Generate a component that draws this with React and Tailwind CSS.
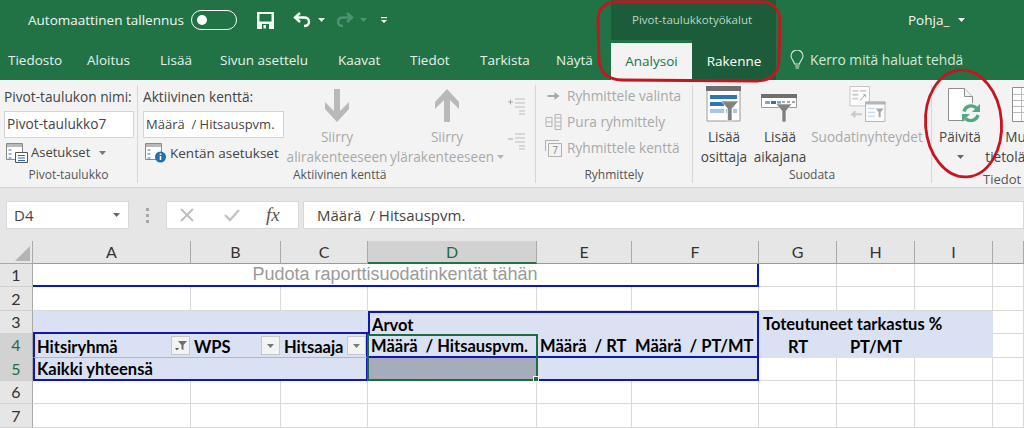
// App.jsx — Excel pivot table ribbon and sheet
const BLUE_CELL = 'border-[#0f17b4]'

function Caret({ className = '' }) {
  return (
    <svg width="7" height="4" viewBox="0 0 7 4" className={className}>
      <path d="M0 0h7L3.500 4z" fill="currentColor" />
    </svg>
  )
}

function SaveIcon() {
  return (
    <svg width="17" height="17" viewBox="0 0 17 17">
      <path d="M0 0h17v17H0z" fill="#f2f7f4" />
      <path d="M2.500 2h12v7.500h-12z" fill="#217346" />
      <path d="M5 12h7v5H5z" fill="#217346" />
      <path d="M6.500 13h2.500v3.500H6.500z" fill="#f2f7f4" />
    </svg>
  )
}

function UndoIcon({ color = '#fff', flip = false }) {
  return (
    <svg width="19" height="16" viewBox="0 0 19 16" fill="none" className={flip ? '-scale-x-100' : ''}>
      <path d="M2 5.500h9c3.500 0 5 2 5 4.500 0 2.500-2 4-5 4" stroke={color} strokeWidth="2.400" />
      <path d="M7 1L2 5.500 7 10" stroke={color} strokeWidth="2.400" />
    </svg>
  )
}

function BulbIcon() {
  return (
    <svg width="14" height="20" viewBox="0 0 14 20" fill="none" stroke="#d5e8dc" strokeWidth="1.100">
      <path d="M4.500 14c0-3-3.500-4.500-3.500-8a6 6 0 0 1 12 0c0 3.500-3.500 5-3.500 8z" />
      <path d="M5 16h4.500M5.500 18h3.500" />
    </svg>
  )
}

function SheetGlyph({ badge }) {
  return (
    <svg width="24" height="20" viewBox="0 0 24 20" fill="none">
      <path d="M.5.500h16v16H.500z" fill="#fff" stroke="#8a8a8a" />
      <path d="M1 1h15v3H1z" fill="#b9b9b9" />
      <path d="M2.500 6h3v2h-3zM2.500 10h3v2h-3zM2.500 14h3v2h-3z" fill="#9cb9d4" />
      {badge === 'list' ? (
        <>
          <path d="M9.500 9.500h12v10h-12z" fill="#fff" stroke="#555" />
          <path d="M12 12.500h7M12 15h7M12 17.500h7" stroke="#2b6ca3" />
        </>
      ) : (
        <>
          <circle cx="15.500" cy="14" r="5.500" fill="#1f6fb2" />
          <path d="M15.500 13v4M15.500 10.500v1.500" stroke="#fff" strokeWidth="1.600" />
        </>
      )}
    </svg>
  )
}

function BigArrow({ up }) {
  return (
    <svg width="28" height="33" viewBox="0 0 28 33" className={up ? 'rotate-180' : ''}>
      <path d="M11 0h6v22l9-9v7L14 33 2 20v-7l9 9z" fill="#b9b9b9" />
    </svg>
  )
}

function OutlineIcon({ minus }) {
  return (
    <svg width="18" height="18" viewBox="0 0 18 18" fill="none">
      <path d={minus ? 'M0 7h5' : 'M0 5h5M2.500 2.500v5'} stroke="#a8a8a8" />
      <path d="M7 2h10M7 6h10M7 10h10M11 14h6M11 17h6" stroke="#bdbdbd" />
    </svg>
  )
}

function GroupIcon({ kind }) {
  if (kind === 'arrow') {
    return (
      <svg width="17" height="14" viewBox="0 0 16 14">
        <path d="M2 6h7V3l5 4-5 4V8H2z" fill="#a9a9a9" />
      </svg>
    )
  }
  if (kind === 'split') {
    return (
      <svg width="17" height="16" viewBox="0 0 16 16" fill="none" stroke="#b5b5b5">
        <path d="M.500 3.500h6v9h-6zM9.500 .500h6v15h-6zM.500 8h6M9.500 4h6M9.500 8h6M9.500 12h6" />
      </svg>
    )
  }
  return (
    <svg width="17" height="17" viewBox="0 0 17 17" fill="none" stroke="#b0b0b0">
      <path d="M.500 11V.500H14" />
      <path d="M3.500 3.500h13v13h-13z" fill="#f3f3f3" />
      <text x="10" y="14" textAnchor="middle" fontSize="10" fill="#8d8d8d" stroke="none">7</text>
    </svg>
  )
}

function FunnelShape({ x, y, s = 1, fill = '#808080' }) {
  return (
    <path
      transform={`translate(${x} ${y}) scale(${s})`}
      d="M0 0h16L10 7v11H6V7z"
      fill={fill}
      stroke="#fff"
      strokeWidth=".6"
    />
  )
}

function SlicerIcon() {
  return (
    <svg width="36" height="36" viewBox="0 0 36 36">
      <path d="M1 1h33v34H1z" fill="#fff" stroke="#9a9a9a" />
      <path d="M0 0h35v5H0z" fill="#6f6f6f" />
      <path d="M4 9h27v4H4zM4 16h14v4H4z" fill="#2e75b6" />
      <path d="M4 23h14v4H4zM20 23h4v4h-4zM27 23h4v4h-4z" fill="#a9c6e3" />
      <FunnelShape x={15} y={15} s={1.100} />
    </svg>
  )
}

function TimelineIcon() {
  return (
    <svg width="38" height="38" viewBox="0 -10 38 38">
      <path d="M.500 .500h35v13H.500z" fill="#fff" stroke="#9a9a9a" />
      <path d="M0 0h36v4H0z" fill="#6f6f6f" />
      <path d="M4 7h5v3H4zM16 7h4v3h-4z" fill="#7fa8d0" />
      <path d="M10 7h5v3h-5z" fill="#2e75b6" />
      <path d="M21 7h3v2h-3zM26 7h3v2h-3zM31 7h3v2h-3z" fill="#a9a9a9" />
      <FunnelShape x={15} y={10} s={1} />
    </svg>
  )
}

function ConnectionsIcon() {
  return (
    <svg width="37" height="36" viewBox="0 0 37 37" fill="none">
      <path d="M.500 .500h20v20H.500z" fill="#fbfbfb" stroke="#c4c4c4" />
      <path d="M3 4h6v2H3zM11 4h6v2h-6zM3 8h6v2H3zM3 12h6v2H3z" fill="#cfcfcf" />
      <path d="M11 15l5-6M14 9h2.500v2.500" stroke="#a8a8a8" />
      <path d="M16.500 16.500h20v20h-20z" fill="#fbfbfb" stroke="#b5b5b5" />
      <path d="M16 16h21v3H16z" fill="#b5b5b5" />
      <path d="M19 23h7M19 27h7M19 31h7" stroke="#bcd0e2" />
      <path d="M27 23h8l-3 4v5h-2v-5z" fill="#a8a8a8" />
      <path d="M13 29H3l3-3M3 29l3 3" stroke="#c9c9c9" strokeWidth="2" />
    </svg>
  )
}

function RefreshIcon() {
  return (
    <svg width="34" height="38" viewBox="0 0 34 38" fill="none" className="ml-[9px]">
      <path d="M.500 4.500h16l8 8v24H.500z" fill="#fff" stroke="#8e8e8e" />
      <path d="M16.500 4.500v8h8" fill="#f3f3f3" stroke="#8e8e8e" />
      <circle cx="23" cy="29" r="10" fill="#f3f3f3" />
      <path d="M16 27.500a7.500 7.500 0 0 1 12.500-3.500" stroke="#55a783" strokeWidth="3.200" />
      <path d="M32 20v8h-8z" fill="#55a783" />
      <path d="M30 31a7.500 7.500 0 0 1-12.500 3.500" stroke="#55a783" strokeWidth="3.200" />
      <path d="M14 38v-8h8z" fill="#55a783" />
    </svg>
  )
}

function DataSourceIcon() {
  return (
    <svg width="28" height="35" viewBox="0 0 28 35" fill="none" stroke="#8e8e8e">
      <path d="M.500 .500h27v34h-27z" fill="#fff" />
      <path d="M9.500 1v33M18.500 1v33M1 7.500h26M1 13.500h26M1 19.500h26M1 25.500h26" stroke="#bcbcbc" />
    </svg>
  )
}

function Group({ width, label, children }) {
  return (
    <div className={`${width} flex flex-col shrink-0 border-r border-[#d6d6d6] mb-[4px]`}>
      <div className="h-[86px] flex overflow-hidden">{children}</div>
      <div className="flex-1 text-center text-[12px] text-[#555] leading-[16px]">{label}</div>
    </div>
  )
}

function BigButton({ width, icon, lines, muted, caret }) {
  return (
    <div className={`${width} shrink-0 flex flex-col items-center text-[13.600px] leading-[20px] whitespace-nowrap ${muted ? 'text-[#a9a9a9]' : 'text-[#444]'}`}>
      <div className="h-[38px] shrink-0 flex items-end justify-center pb-[1px]">{icon}</div>
      <div className="mt-[4px]">{lines[0]}</div>
      <div className="h-[20px] flex items-center gap-[3px]">
        {lines[1]}
        {caret && <Caret className="text-[#b5b5b5]" />}
      </div>
    </div>
  )
}

function Filter({ active }) {
  return (
    <div className="size-[19px] -mt-[2px] bg-[#f3f3f3] border border-[#c8c8c8] flex items-center justify-center shrink-0 text-[#777]">
      {active ? (
        <svg width="12" height="11" viewBox="0 0 12 11">
          <path d="M3 1h9L8.500 5v5l-2-1V5z" fill="#6d6d6d" />
          <path d="M0 8h4L2 10.500z" fill="#555" />
        </svg>
      ) : (
        <Caret />
      )}
    </div>
  )
}

function ColHead({ label, selected }) {
  return (
    <div className={`flex items-center justify-center border-r border-[#a9a9a9] border-b text-[16px] ${selected ? 'bg-[#d2d2d2] text-[#1e6b43] border-b-2 border-b-[#217346]' : 'bg-[#e6e6e6] border-b-[#9a9a9a] text-[#333]'}`}>
      {label}
    </div>
  )
}

function RowHead({ n, selected }) {
  return (
    <div className={`flex items-center justify-center text-[16px] border-r border-[#a9a9a9] border-b border-b-[#d0d0d0] ${selected ? 'bg-[#d2d2d2] text-[#1e6b43]' : 'bg-[#e6e6e6] text-[#333]'}`}>
      {n}
    </div>
  )
}

function Cell({ className = 'border-r border-b border-[#d9d9d9]', children }) {
  return <div className={`flex items-center min-w-0 pt-[3px] font-bold text-[16.500px] text-black whitespace-nowrap ${className}`}>{children}</div>
}

function BlankCells({ count }) {
  return Array.from({ length: count }, (_, i) => <Cell key={i} />)
}

export default function App() {
  return (
    <div className="relative w-[1024px] h-[428px] overflow-hidden bg-white font-['Open_Sans',sans-serif]">
      {/* title bar */}
      <div className="h-[40px] bg-[#217346] flex text-white text-[13.500px]">
        <div className="w-[611px] flex items-center pl-[28px] shrink-0">
          <span className="text-[#f2f7f4]">Automaattinen tallennus</span>
          <div className="ml-[7px] w-[46px] h-[20px] rounded-full border border-white flex items-center pl-[5px]">
            <div className="size-[10px] rounded-full bg-white" />
          </div>
          <div className="ml-[20px]"><SaveIcon /></div>
          <div className="ml-[19px]"><UndoIcon /></div>
          <Caret className="ml-[6px] text-[#e3eee8]" />
          <div className="ml-[10px]"><UndoIcon color="#4b9670" flip /></div>
          <Caret className="ml-[6px] text-[#4b9670]" />
          <svg width="6" height="6" viewBox="0 0 6 6" className="ml-[14px] text-white" fill="currentColor">
            <path d="M0 0h6v1.300H0zM0 3h6L3 6z" />
          </svg>
        </div>
        <div className="w-[165px] bg-[#1d5c3a] flex items-center pl-[21px] text-[11.500px] text-[#b9d6c5] shrink-0">
          Pivot-taulukkotyökalut
        </div>
        <div className="flex-1 flex items-center pl-[132px] gap-[9px] text-[#f6f6f6]">
          Pohja_ <Caret />
        </div>
      </div>

      {/* tabs */}
      <div className="h-[40px] bg-[#217346] flex text-[13.500px] text-[#e8f1ec] leading-[40px]">
        <div className="w-[611px] flex pl-[8px] shrink-0">
          <span className="w-[79px]">Tiedosto</span>
          <span className="w-[73px]">Aloitus</span>
          <span className="w-[60px]">Lisää</span>
          <span className="w-[118px]">Sivun asettelu</span>
          <span className="w-[72px]">Kaavat</span>
          <span className="w-[70px]">Tiedot</span>
          <span className="w-[76px]">Tarkista</span>
          <span>Näytä</span>
        </div>
        <div className="w-[81px] mt-[3px] bg-[#f3f3f3] text-[#217346] text-center leading-[37px] shrink-0">Analysoi</div>
        <div className="w-[84px] bg-[#1d5c3a] text-white text-center leading-[42px] shrink-0">Rakenne</div>
        <div className="flex items-center pl-[14px] gap-[6px] text-[13.800px] text-[#d5e8dc]">
          <BulbIcon />
          Kerro mitä haluat tehdä
        </div>
      </div>

      {/* ribbon */}
      <div className="h-[108px] bg-[#f3f3f3] border-b border-[#d2d2d2] flex pt-[5px] text-[13.700px] text-[#444]">
        <Group width="w-[138px]" label="Pivot-taulukko">
          <div className="pl-[4px] pt-[2px] w-full">
            <div className="leading-[20px] whitespace-nowrap">Pivot-taulukon nimi:</div>
            <div className="mt-[4px] w-[130px] h-[27px] bg-white border border-[#d4d4d4] flex items-center pl-[2px]">Pivot-taulukko7</div>
            <div className="mt-[2px] flex items-center pl-[2px] gap-[1px] h-[26px] text-[13px]">
              <SheetGlyph badge="list" />
              Asetukset
              <Caret className="ml-[8px] text-[#777]" />
            </div>
          </div>
        </Group>
        <Group width="w-[398px]" label={<div className="text-left pl-[155px]">Aktiivinen kenttä</div>}>
          <div className="pl-[5px] pt-[2px] w-[146px] shrink-0">
            <div className="leading-[20px] whitespace-nowrap">Aktiivinen kenttä:</div>
            <div className="mt-[4px] w-[141px] h-[27px] bg-white border border-[#d4d4d4] flex items-center pl-[2px] whitespace-nowrap overflow-hidden text-[13px]">Määrä&nbsp; / Hitsauspvm.</div>
            <div className="mt-[2px] flex items-center pl-[2px] gap-[1px] h-[26px] whitespace-nowrap text-[13.500px]">
              <SheetGlyph />
              Kentän asetukset
            </div>
          </div>
          <BigButton width="w-[106px]" muted icon={<BigArrow />} lines={['Siirry', 'alirakenteeseen']} />
          <BigButton width="w-[114px]" muted caret icon={<BigArrow up />} lines={['Siirry', 'ylärakenteeseen']} />
          <div className="pt-[12px] flex flex-col gap-[17px] pl-[4px]">
            <OutlineIcon />
            <OutlineIcon minus />
          </div>
        </Group>
        <Group width="w-[157px]" label="Ryhmittely">
          <div className="pl-[9px] flex flex-col text-[#a9a9a9] leading-[26px] whitespace-nowrap -mt-[2px]">
            <div className="flex items-center gap-[5px]"><GroupIcon kind="arrow" />Ryhmittele valinta</div>
            <div className="flex items-center gap-[5px]"><GroupIcon kind="split" />Pura ryhmittely</div>
            <div className="flex items-center gap-[5px]"><GroupIcon kind="seven" />Ryhmittele kenttä</div>
          </div>
        </Group>
        <Group width="w-[239px]" label="Suodata">
          <BigButton width="w-[62px]" icon={<SlicerIcon />} lines={['Lisää', 'osittaja']} />
          <BigButton width="w-[50px]" icon={<TimelineIcon />} lines={['Lisää', 'aikajana']} />
          <BigButton width="w-[124px]" muted icon={<ConnectionsIcon />} lines={['Suodatinyhteydet', '']} />
        </Group>
        <div className="flex-1 flex flex-col min-w-0 overflow-hidden">
          <div className="h-[86px] flex">
            <BigButton width="w-[56px]" icon={<RefreshIcon />} lines={['Päivitä', <Caret key="c" className="text-[#666]" />]} />
            <BigButton width="w-[76px]" icon={<DataSourceIcon />} lines={['Muuta', 'tietolähdettä']} />
          </div>
          <div className="text-[13px] text-[#555] leading-[16px] pl-[51px] whitespace-nowrap">Tiedot</div>
        </div>
      </div>

      {/* formula bar */}
      <div className="h-[53px] bg-[#e6e6e6] flex items-start pt-[13px] text-[15px] text-[#444]">
        <div className="ml-[6px] w-[123px] h-[28px] bg-white border border-[#d8d8d8] flex items-center justify-between pl-[7px] pr-[8px]">
          D4
          <Caret className="text-[#666]" />
        </div>
        <div className="w-[37px] h-[28px] flex flex-col items-center justify-center gap-[3px]">
          <div className="size-[3px] bg-[#a8a8a8]" />
          <div className="size-[3px] bg-[#a8a8a8]" />
          <div className="size-[3px] bg-[#a8a8a8]" />
        </div>
        <div className="w-[133px] h-[28px] bg-white border border-[#d8d8d8] flex items-center pl-[13px]">
          <svg width="14" height="14" viewBox="0 0 14 14" fill="none" stroke="#bdbdbd" strokeWidth="1.800">
            <path d="M1 1l12 12M13 1L1 13" />
          </svg>
          <svg width="16" height="14" viewBox="0 0 16 14" fill="none" stroke="#c4c4c4" strokeWidth="2.400" className="ml-[30px]">
            <path d="M1 7l5 5 9-10" />
          </svg>
          <span className="ml-[26px] font-['Liberation_Serif',serif] italic text-[19px] text-[#555]">fx</span>
        </div>
        <div className="ml-[4px] flex-1 h-[28px] bg-white border border-[#d8d8d8] flex items-center pl-[13px]">
          Määrä&nbsp; / Hitsauspvm.
        </div>
      </div>

      {/* sheet */}
      <div className="relative h-[187px] bg-white font-['Lato',sans-serif] grid grid-cols-[33px_158px_90px_87px_169px_95px_127px_78px_78px_78px_1fr] grid-rows-[23px_repeat(7,23.400px)]">
        <div className="bg-[#e6e6e6] border-r border-b border-[#a9a9a9] flex items-end justify-end p-[2px]">
          <svg width="15" height="15" viewBox="0 0 15 15"><path d="M15 0v15H0z" fill="#b4b4b4" /></svg>
        </div>
        {['A', 'B', 'C', 'D', 'E', 'F', 'G', 'H', 'I', ''].map((c) => (
          <ColHead key={c} label={c} selected={c === 'D'} />
        ))}

        {/* row 1 */}
        <RowHead n="1" />
        <div className={`col-span-6 border-r-2 border-b-2 ${BLUE_CELL} flex items-center justify-center text-[18px] text-[#9a9a9a] font-['Liberation_Sans',sans-serif]`}>
          Pudota raporttisuodatinkentät tähän
        </div>
        <BlankCells count={4} />

        {/* row 2 */}
        <RowHead n="2" />
        <BlankCells count={10} />

        {/* row 3 */}
        <RowHead n="3" />
        <div className={`col-span-3 bg-[#d9e1f2] border-b-2 ${BLUE_CELL}`} />
        <Cell className={`col-span-3 bg-[#d9e1f2] border-2 border-b-0 ${BLUE_CELL} pl-[2px]`}>Arvot</Cell>
        <Cell className="col-span-3 bg-[#d9e1f2] pl-[4px]">Toteutuneet tarkastus %</Cell>
        <Cell />

        {/* row 4 */}
        <RowHead n="4" selected />
        <Cell className={`bg-[#d9e1f2] border-l-2 ${BLUE_CELL} border-b border-b-[#a9b7d3] justify-between pl-[2px] pr-[1px]`}>Hitsiryhmä<Filter active /></Cell>
        <Cell className="bg-[#d9e1f2] border-b border-[#a9b7d3] justify-between pl-[3px] pr-[1px]">WPS<Filter /></Cell>
        <Cell className="bg-[#d9e1f2] border-b border-b-[#a9b7d3] border-r-2 border-r-[#0f17b4] justify-between pl-[3px]">Hitsaaja<Filter /></Cell>
        <Cell className={`bg-[#d9e1f2] pl-[3px] border-b-2 ${BLUE_CELL}`}>Määrä&nbsp; / Hitsauspvm.</Cell>
        <Cell className={`bg-[#d9e1f2] pl-[3px] border-b-2 ${BLUE_CELL}`}>Määrä&nbsp; / RT</Cell>
        <Cell className={`bg-[#d9e1f2] pl-[3px] border-b-2 border-r-2 ${BLUE_CELL}`}>Määrä&nbsp; / PT/MT</Cell>
        <Cell className="bg-[#d9e1f2] justify-center">RT</Cell>
        <Cell className="bg-[#d9e1f2] justify-center">PT/MT</Cell>
        <Cell className="bg-[#d9e1f2]" />
        <Cell />

        {/* row 5 */}
        <RowHead n="5" selected />
        <Cell className={`col-span-3 bg-[#d9e1f2] border-l-2 border-b-2 border-r-2 ${BLUE_CELL} pl-[2px]`}>Kaikki yhteensä</Cell>
        <Cell className={`bg-[#a6acb9] border-b-2 ${BLUE_CELL}`} />
        <Cell className={`col-span-2 bg-[#d9e1f2] border-b-2 border-r-2 ${BLUE_CELL}`} />
        <BlankCells count={4} />

        {/* row 6, 7 */}
        <RowHead n="6" />
        <BlankCells count={10} />
        <RowHead n="7" />
        <BlankCells count={10} />

        {/* selected cell outline */}
        <div className="absolute left-[367px] top-[93px] w-[171px] h-[47px] border-2 border-[#1e6b43] pointer-events-none">
          <div className="absolute -right-[3px] -bottom-[3px] size-[6px] bg-[#1e6b43] border border-white" />
        </div>
      </div>

      {/* red hand drawn marks */}
      <svg width="1024" height="428" className="absolute inset-0 pointer-events-none" fill="none" stroke="#c8141e" strokeWidth="2.800">
        <path d="M616 2h146c10 0 17 6 18 18l-1 40c0 13-9 21-22 21l-135-1c-13 0-22-7-23-20l-1-40c0-11 7-18 18-18z" />
        <ellipse cx="963.500" cy="123.500" rx="38" ry="53.500" transform="rotate(-4 963.500 123.500)" />
      </svg>
    </div>
  )
}
